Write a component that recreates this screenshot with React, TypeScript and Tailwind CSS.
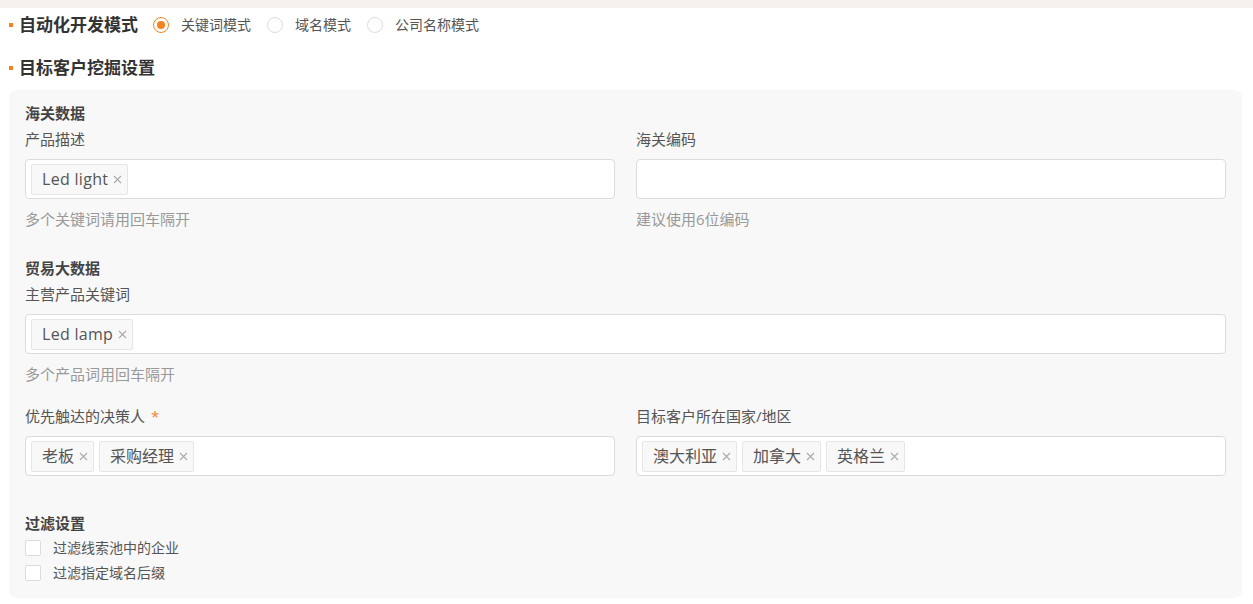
import React from "react";

const FONT = { fontFamily: '"Open Sans", "Noto Sans CJK SC", sans-serif' };

function SectionTitle({ children }: { children: React.ReactNode }) {
  return (
    <div className="flex items-center">
      <span className="w-[4px] h-[4px] bg-[#f5821f] mr-[6px] ml-[8px]" />
      <span className="text-[17px] leading-[24px] font-bold text-[#333]">{children}</span>
    </div>
  );
}

function Radio({ checked, label }: { checked?: boolean; label: string }) {
  return (
    <label className="flex items-center">
      <span
        className={
          checked
            ? "w-[16px] h-[16px] rounded-full border border-[#f5821f] bg-white flex items-center justify-center"
            : "w-[16px] h-[16px] rounded-full border border-[#dcdcdc] bg-white"
        }
      >
        {checked && <span className="w-[8px] h-[8px] rounded-full bg-[#f5821f]" />}
      </span>
      <span className="ml-[12px] text-[14px] leading-[20px] text-[#555]">{label}</span>
    </label>
  );
}

function Tag({ text, latin }: { text: string; latin?: boolean }) {
  return (
    <span className="flex items-center h-[31px] pl-[10px] pr-[5px] bg-[#f8f8f8] border border-[#e6e6e6] rounded-[2px]">
      <span className={latin ? "text-[16px] leading-[20px] text-[#555] tracking-[0.3px]" : "text-[16px] leading-[20px] text-[#555]"}>
        {text}
      </span>
      <svg className="ml-[5px]" width="9" height="9" viewBox="0 0 9 9">
        <path d="M1 1 L8 8 M8 1 L1 8" stroke="#aaa" strokeWidth="1.1" fill="none" />
      </svg>
    </span>
  );
}

function TagInput({ tags, latin }: { tags: string[]; latin?: boolean }) {
  return (
    <div className="flex items-center gap-[5px] h-[40px] px-[5px] bg-white border border-[#dcdcdc] rounded-[4px]">
      {tags.map((t) => (
        <Tag key={t} text={t} latin={latin} />
      ))}
    </div>
  );
}

function Label({ children, required }: { children: React.ReactNode; required?: boolean }) {
  return (
    <div className="text-[15px] leading-[20px] text-[#555]">
      {children}
      {required && <span className="ml-[6px] text-[#f5821f]">*</span>}
    </div>
  );
}

function Hint({ children }: { children: React.ReactNode }) {
  return <div className="mt-[10px] text-[15px] leading-[20px] text-[#999]">{children}</div>;
}

function Sub({ children }: { children: React.ReactNode }) {
  return <div className="text-[15px] leading-[20px] font-bold text-[#444]">{children}</div>;
}

function Check({ label }: { label: string }) {
  return (
    <div className="flex items-center h-[25px]">
      <span className="w-[16px] h-[16px] bg-white border border-[#dcdcdc] rounded-[2px]" />
      <span className="ml-[12px] text-[14px] leading-[20px] text-[#555]">{label}</span>
    </div>
  );
}

export default function App() {
  return (
    <div className="w-[1253px] h-[604px] bg-white overflow-hidden" style={FONT}>
      <div className="h-[8px] bg-[#f5f2ed]" />
      <div className="pl-[1px] pr-[11px]">
        <div className="flex items-center h-[24px] mt-[5px]">
          <SectionTitle>自动化开发模式</SectionTitle>
          <div className="flex items-center ml-[15px] gap-[16px]">
            <Radio checked label="关键词模式" />
            <Radio label="域名模式" />
            <Radio label="公司名称模式" />
          </div>
        </div>
        <div className="mt-[19px] h-[24px] flex items-center">
          <SectionTitle>目标客户挖掘设置</SectionTitle>
        </div>
        <div className="ml-[8px] mt-[10px] h-[508px] bg-[#f8f8f8] rounded-[8px] pt-[13px] px-[16px]">
          <Sub>海关数据</Sub>
          <div className="grid grid-cols-2 gap-x-[21px] mt-[6px]">
            <div>
              <Label>产品描述</Label>
              <div className="mt-[10px]">
                <TagInput tags={["Led light"]} latin />
              </div>
              <Hint>多个关键词请用回车隔开</Hint>
            </div>
            <div>
              <Label>海关编码</Label>
              <div className="mt-[10px]">
                <TagInput tags={[]} />
              </div>
              <Hint>建议使用6位编码</Hint>
            </div>
          </div>
          <div className="mt-[29px]">
            <Sub>贸易大数据</Sub>
          </div>
          <div className="mt-[6px]">
            <Label>主营产品关键词</Label>
            <div className="mt-[10px]">
              <TagInput tags={["Led lamp"]} latin />
            </div>
            <Hint>多个产品词用回车隔开</Hint>
          </div>
          <div className="grid grid-cols-2 gap-x-[21px] mt-[22px]">
            <div>
              <Label required>优先触达的决策人</Label>
              <div className="mt-[10px]">
                <TagInput tags={["老板", "采购经理"]} />
              </div>
            </div>
            <div>
              <Label>目标客户所在国家/地区</Label>
              <div className="mt-[10px]">
                <TagInput tags={["澳大利亚", "加拿大", "英格兰"]} />
              </div>
            </div>
          </div>
          <div className="mt-[37px]">
            <Sub>过滤设置</Sub>
          </div>
          <div className="mt-[2px]">
            <Check label="过滤线索池中的企业" />
            <Check label="过滤指定域名后缀" />
          </div>
        </div>
      </div>
    </div>
  );
}
